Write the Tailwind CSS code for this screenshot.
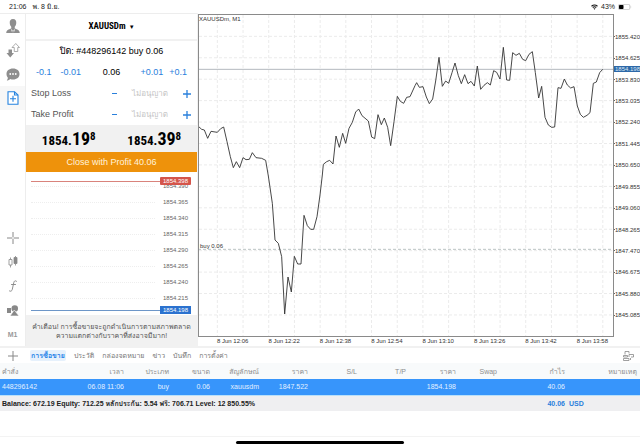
<!DOCTYPE html>
<html lang="th">
<head>
  <meta charset="UTF-8" />
  <meta name="viewport" content="width=device-width, initial-scale=1.0"/>
  <title>XAUUSDm, M1</title>
  <script src="https://cdn.jsdelivr.net/npm/@tailwindcss/browser@4"></script>
</head>
<body class="min-h-screen flex flex-col bg-white text-black font-['Liberation_Sans','Loma','Noto_Sans_Thai_Looped',sans-serif] text-[7px] leading-none">

  <!-- Status bar -->
  <header class="h-[13px] px-2 flex justify-between items-center text-[#222]">
    <div class="flex gap-[6px] pl-px"><span>21:06</span><span>พ. 8 มิ.ย.</span></div>
    <div class="flex items-center gap-[3px]">
      <svg class="w-[7px] h-[6px]" viewBox="0 0 14 11" fill="none" stroke="#111" stroke-width="2.2"><path d="M1 4Q7-1 13 4M3.5 6.500Q7 3.500 10.500 6.500"/><path d="M5 8.500Q7 7 9 8.500L7 11Z" fill="#111" stroke="none"/></svg>
      <span>43%</span>
      <svg class="w-[14px] h-[6px]" viewBox="0 0 28 12"><rect x=".7" y=".7" width="23" height="10.600" rx="3" fill="#fff" stroke="#aaa" stroke-width="1.200"/><rect x="2" y="2" width="9" height="8" rx="1.500"/><path d="M25.500 4q2 2 0 4z" fill="#aaa"/></svg>
    </div>
  </header>

  <main class="flex">
    <!-- Tools -->
    <nav class="w-[26px] shrink-0 flex flex-col justify-between border-t border-r border-[#ededed] text-[#8e8e8e]">
      <div class="flex flex-col">
        <button aria-label="Accounts" class="h-6 grid place-items-center"><svg class="w-[14px] h-[15px]" viewBox="0 0 28 30" fill="#8e8e8e"><path d="M14 0c5 0 7 4 6.500 8 0 3-1.500 6-3 7.500V19c5 2 10 3 10 9H.5c0-6 5-7 10-9v-3.500c-1.500-1.500-3-4.500-3-7.500C7 4 9 0 14 0z"/><path d="M10 20l4 3 4-3-2.500 8h-3z" fill="#fff"/><path d="M13 22.500h2l1 5.500h-4z"/></svg></button>
        <button aria-label="Trade" class="h-6 grid place-items-center"><svg class="w-[14px] h-[15px]" viewBox="0 0 28 30"><path d="M5 13h7v7h4L8.500 29 1 20h4z" fill="#8e8e8e"/><path d="M19.500 1L27 9h-3.500v8h-7V9H12z" fill="#fff" stroke="#999" stroke-width="1.600"/></svg></button>
        <button aria-label="Messages" class="h-6 grid place-items-center"><svg class="w-[14px] h-[13px]" viewBox="0 0 28 26"><path d="M14 1c8 0 13 4.500 13 11s-5 11-13 11c-2 0-4-.3-5.500-1C6 24 3 25 1.500 25 3 23 4 21 3.500 19 2 17 1 15 1 12 1 5.500 6 1 14 1z" fill="#8e8e8e"/><g fill="#fff"><circle cx="8.500" cy="12" r="1.800"/><circle cx="14" cy="12" r="1.800"/><circle cx="19.500" cy="12" r="1.800"/></g></svg></button>
        <button aria-label="New order" class="h-6 grid place-items-center bg-[#f7f7f7]"><svg class="w-[12px] h-[14px]" viewBox="0 0 24 28" fill="none" stroke="#2583e0" stroke-width="2.200"><path d="M2 1.500h13L22 8v18.500H2z" fill="#fff"/><path d="M15 1.500V8h7M12 9.500v12M6 15.500h12"/></svg></button>
      </div>
      <div class="flex flex-col">
        <button aria-label="Crosshair" class="h-6 grid place-items-center"><svg class="w-[12px] h-[12px]" viewBox="0 0 24 24" stroke="#888" stroke-width="2"><path d="M12 0v10.500M12 13.500V24M0 12h10.500M13.500 12H24"/></svg></button>
        <button aria-label="Candles" class="h-6 grid place-items-center"><svg class="w-[10px] h-[12px]" viewBox="0 0 20 24" fill="none" stroke="#888" stroke-width="1.600"><path d="M5 3v4M5 18v5M2 7h6v11H2zM15 0v3M15 15v4"/><path d="M12 3h6v12h-6z" fill="#888"/></svg></button>
        <button aria-label="Indicators" class="h-6 grid place-items-center"><svg class="w-[8px] h-[12px]" viewBox="0 0 16 24" fill="none" stroke="#888" stroke-width="1.900" stroke-linecap="round"><path d="M15 2.500c-3-2.500-5 0-5.500 3L6.500 19c-.7 3-3 4.500-5.500 3M5 9h8"/></svg></button>
        <button aria-label="Objects" class="h-6 grid place-items-center"><svg class="w-[12px] h-[11px]" viewBox="0 0 24 22" fill="#888"><path d="M0 6h8v10H0z"/><circle cx="15.500" cy="7" r="6.500"/><path d="M14.500 10L24 22H6z" stroke="#fff" stroke-width="1.200"/></svg></button>
        <button class="h-6 font-bold text-[7px] text-[#999]">M1</button>
      </div>
    </nav>

    <!-- Order -->
    <section class="w-[171px] shrink-0 flex flex-col border-t border-[#ededed] text-[9px]">
      <button class="h-[27px] border-b-2 border-[#f1f1f1] font-bold font-['Roboto_Condensed','Liberation_Sans_Narrow','Roboto',sans-serif] flex items-center justify-center gap-[3px]">XAUUSDm <span class="text-[6px]">▼</span></button>
      <p class="h-[21px] flex items-center justify-center">ปิด: #448296142 buy 0.06</p>
      <div class="h-[21px] px-[10px] flex items-center justify-between text-[#2a80dc]">
        <div class="w-14 flex gap-[9px]"><button>-0.1</button><button>-0.01</button></div>
        <output class="text-black">0.06</output>
        <div class="w-14 flex gap-[6px] justify-end"><button>+0.01</button><button>+0.1</button></div>
      </div>
      <div class="h-[21px] pl-[5px] pr-[6px] flex items-center text-[#555]">
        <label for="sl" class="flex-1">Stop Loss</label>
        <button aria-label="Decrease stop loss" class="w-[5px] h-px bg-[#2a80dc]"></button>
        <input id="sl" placeholder="ไม่อนุญาต" class="w-[66px] text-[8px] text-center placeholder:text-[#c4c4c4]">
        <button aria-label="Increase stop loss"><svg class="w-2 h-2" viewBox="0 0 8 8" stroke="#2a80dc" stroke-width="1.300"><path d="M4 0v8M0 4h8"/></svg></button>
      </div>
      <div class="h-[21px] pl-[5px] pr-[6px] flex items-center text-[#555]">
        <label for="tp" class="flex-1">Take Profit</label>
        <button aria-label="Decrease take profit" class="w-[5px] h-px bg-[#2a80dc]"></button>
        <input id="tp" placeholder="ไม่อนุญาต" class="w-[66px] text-[8px] text-center placeholder:text-[#c4c4c4]">
        <button aria-label="Increase take profit"><svg class="w-2 h-2" viewBox="0 0 8 8" stroke="#2a80dc" stroke-width="1.300"><path d="M4 0v8M0 4h8"/></svg></button>
      </div>
      <div class="h-[27px] bg-[#f1f1f1] grid grid-cols-2 font-bold font-['Roboto_Condensed','Liberation_Sans_Narrow','Roboto',sans-serif] text-[13px]">
        <div class="flex items-center justify-center"><p>1854.<span class="text-[18px]">19</span><span class="text-[11px] align-[5px]">8</span></p></div>
        <div class="flex items-center justify-center"><p>1854.<span class="text-[18px]">39</span><span class="text-[11px] align-[5px]">8</span></p></div>
      </div>
      <button class="h-5 bg-[#ee920b] text-[#fff3dc]">Close with Profit 40.06</button>

      <!-- Price ladder -->
      <div class="relative pt-[6px] pb-px pl-[5px] pr-[6px] text-[6px] text-[#666]">
        <div class="absolute inset-x-0 top-[5px] pl-[5px] pr-[6px] flex items-center"><i class="flex-1 h-px bg-[#d9837c]"></i><span class="w-[31px] h-2 leading-[8px] text-center text-white bg-[#d4554b] rounded-[1px]">1854.398</span></div>
        <div class="h-4 flex items-center gap-2"><i class="flex-1 border-t border-dotted border-[#eee]"></i><span class="w-[28px]">1854.390</span></div>
        <div class="h-4 flex items-center gap-2"><i class="flex-1 border-t border-dotted border-[#eee]"></i><span class="w-[28px]">1854.365</span></div>
        <div class="h-4 flex items-center gap-2"><i class="flex-1 border-t border-dotted border-[#eee]"></i><span class="w-[28px]">1854.340</span></div>
        <div class="h-4 flex items-center gap-2"><i class="flex-1 border-t border-dotted border-[#eee]"></i><span class="w-[28px]">1854.315</span></div>
        <div class="h-4 flex items-center gap-2"><i class="flex-1 border-t border-dotted border-[#eee]"></i><span class="w-[28px]">1854.290</span></div>
        <div class="h-4 flex items-center gap-2"><i class="flex-1 border-t border-dotted border-[#eee]"></i><span class="w-[28px]">1854.265</span></div>
        <div class="h-4 flex items-center gap-2"><i class="flex-1 border-t border-dotted border-[#eee]"></i><span class="w-[28px]">1854.240</span></div>
        <div class="h-4 flex items-center gap-2"><i class="flex-1 border-t border-dotted border-[#eee]"></i><span class="w-[28px]">1854.215</span></div>
        <div class="flex items-center"><i class="flex-1 h-px bg-[#6d96c8]"></i><span class="w-[31px] h-2 leading-[8px] text-center text-white bg-[#2b72cf]">1854.198</span></div>
      </div>
      <p class="flex-1 min-h-[31px] bg-[#f1f1f1] text-[#555] text-[7px] leading-[9px] text-center whitespace-nowrap flex items-center justify-center">คำเตือน! การซื้อขายจะถูกดำเนินการตามสภาพตลาด<br>ความแตกต่างกับราคาที่ส่งอาจมีมาก!</p>
    </section>

    <!-- Chart -->
    <section class="flex-1 min-w-0 flex flex-col pl-px pt-px border-l border-l-[#f1f1f1] text-[6px] text-[#333]">
      <div class="flex-1 flex -ml-px">
        <div class="relative flex-1 border border-[#8a8a8a]">
          <svg id="plot" class="absolute inset-0 w-full h-full" viewBox="27 45 1242 963" preserveAspectRatio="none" fill="none">
            <g id="grid" stroke="#ebebeb" stroke-dasharray="3 2"></g>
            <path d="M24 208H1269" stroke="#b4b8be" vector-effect="non-scaling-stroke"/>
            <path d="M24 748H1269" stroke="#bcc4c4" stroke-dasharray="3 2" vector-effect="non-scaling-stroke"/>
            <polyline stroke="#333" stroke-width=".9" vector-effect="non-scaling-stroke" stroke-linejoin="round" points="24,378 35,388 43,390 53,415 63,394 82,397 92,386 101,381 111,425 121,470 130,503 139,485 149,503 159,473 168,479 178,478 187,458 198,473 215,475 227,481 235,528 247,610 255,720 265,730 275,770 284,942 294,831 304,876 313,769 323,792 333,792 342,646 352,677 362,688 371,688 381,650 390,585 397,525 400,493 410,485 419,481 429,492 438,408 448,442 458,400 467,430 477,385 487,367 497,336 506,327 516,347 535,363 545,411 554,416 564,344 574,374 583,354 593,382 602,437 612,365 622,289 631,304 641,310 650,292 660,290 675,257 680,248 688,262 699,260 709,291 718,311 728,297 737,243 747,172 757,259 767,243 776,250 786,218 795,189 805,227 814,251 824,224 834,251 843,244 853,258 862,198 872,268 882,256 892,248 901,255 911,212 920,217 930,237 940,142 950,240 959,241 968,158 978,166 988,160 998,178 1007,182 1017,163 1027,155 1036,218 1046,294 1055,259 1065,352 1075,375 1085,382 1094,381 1104,263 1113,265 1123,237 1132,255 1142,264 1152,260 1162,318 1171,343 1180,352 1191,346 1200,338 1210,250 1219,246 1229,218 1238,208"/>
          </svg>
          <h2 class="absolute left-0 top-px">XAUUSDm, M1</h2>
          <span class="absolute left-px top-[71%]">buy 0.06</span>
        </div>
        <div class="relative w-[26px] pt-3 pb-[11px] flex flex-col">
          <span class="flex-1 flex items-center"><i class="w-px h-px bg-[#666]"></i>1855.420</span>
          <span class="flex-1 flex items-center"><i class="w-px h-px bg-[#666]"></i>1854.625</span>
          <span class="flex-1 flex items-center"><i class="w-px h-px bg-[#666]"></i>1853.830</span>
          <span class="flex-1 flex items-center"><i class="w-px h-px bg-[#666]"></i>1853.035</span>
          <span class="flex-1 flex items-center"><i class="w-px h-px bg-[#666]"></i>1852.240</span>
          <span class="flex-1 flex items-center"><i class="w-px h-px bg-[#666]"></i>1851.445</span>
          <span class="flex-1 flex items-center"><i class="w-px h-px bg-[#666]"></i>1850.650</span>
          <span class="flex-1 flex items-center"><i class="w-px h-px bg-[#666]"></i>1849.855</span>
          <span class="flex-1 flex items-center"><i class="w-px h-px bg-[#666]"></i>1849.060</span>
          <span class="flex-1 flex items-center"><i class="w-px h-px bg-[#666]"></i>1848.265</span>
          <span class="flex-1 flex items-center"><i class="w-px h-px bg-[#666]"></i>1847.470</span>
          <span class="flex-1 flex items-center"><i class="w-px h-px bg-[#666]"></i>1846.675</span>
          <span class="flex-1 flex items-center"><i class="w-px h-px bg-[#666]"></i>1845.880</span>
          <span class="flex-1 flex items-center"><i class="w-px h-px bg-[#666]"></i>1845.085</span>
          <span class="absolute inset-x-0 top-[16%] h-[6px] pl-px bg-[#2d68a8] text-[#dbe8f6]">1854.198</span>
        </div>
      </div>
      <div class="h-[9px] pl-[18px] pr-[12px] pt-px grid grid-cols-8 whitespace-nowrap">
        <span>8 Jun 12:06</span><span>8 Jun 12:22</span><span>8 Jun 12:38</span><span>8 Jun 12:54</span><span>8 Jun 13:10</span><span>8 Jun 13:26</span><span>8 Jun 13:42</span><span>8 Jun 13:58</span>
      </div>
    </section>
  </main>

  <!-- Terminal tabs -->
  <nav class="h-[17px] flex items-center border-t-2 border-[#f1f1f1] text-[#777]">
    <button aria-label="Add" class="w-[26px] grid place-items-center"><svg class="w-[10px] h-[10px]" viewBox="0 0 10 10" stroke="#888"><path d="M5 0v10M0 5h10"/></svg></button>
    <div class="flex-1 pl-1 flex items-center gap-2">
      <button class="h-[11px] px-px rounded-[2px] bg-[#e6f1fc] text-[#1b7fe8] font-bold">การซื้อขาย</button>
      <button>ประวัติ</button>
      <button>กล่องจดหมาย</button>
      <button>ข่าว</button>
      <button>บันทึก</button>
      <button>การตั้งค่า</button>
    </div>
    <button aria-label="Layout" class="pr-[6px]"><svg class="w-[11px] h-[10px]" viewBox="0 0 22 20" fill="none" stroke="#888" stroke-width="1.600"><path d="M4 7V1h8v4M1 9h8v3H1zM1 15h11v4H1zM12 12V7h9v5h-5M15 14v4"/></svg></button>
  </nav>

  <table class="w-full table-fixed text-right">
    <colgroup>
      <col class="w-[60px]"><col class="w-[64px]"><col class="w-[45px]"><col class="w-[41px]"><col class="w-[49px]"><col class="w-[49px]"><col class="w-[49px]"><col class="w-[49px]"><col class="w-[50px]"><col class="w-[41px]"><col class="w-[68px]"><col class="w-[75px]">
    </colgroup>
    <thead>
      <tr class="h-4 bg-[#f8fafb] text-[#8d8d8d] *:font-normal">
        <th class="text-left pl-[2px]">คำสั่ง</th><th>เวลา</th><th>ประเภท</th><th>ขนาด</th><th>สัญลักษณ์</th><th>ราคา</th><th>S/L</th><th>T/P</th><th>ราคา</th><th>Swap</th><th>กำไร</th><th class="pr-[3px]">หมายเหตุ</th>
      </tr>
    </thead>
    <tbody>
      <tr class="h-4 bg-[#3795fb] text-[#e3f0ff]">
        <td class="text-left pl-[2px]">448296142</td><td>06.08 11:06</td><td>buy</td><td>0.06</td><td>xauusdm</td><td>1847.522</td><td></td><td></td><td>1854.198</td><td></td><td>40.06</td><td></td>
      </tr>
    </tbody>
    <tfoot>
      <tr class="h-4 bg-[#efeff1] border-t border-[#b9e0fa] font-bold">
        <td colspan="10" class="text-left pl-[2px] text-[#222]">Balance: 672.19 Equity: 712.25 หลักประกัน: 5.54 ฟรี: 706.71 Level: 12 850.55%</td>
        <td class="text-[#2a80dc]">40.06</td>
        <td class="text-left pl-1 text-[#2a80dc]">USD</td>
      </tr>
    </tfoot>
  </table>

  <!-- Home indicator -->
  <footer class="mt-auto h-[11px] border-t border-[#f3f3f3] flex justify-center items-center"><div class="w-[168px] h-[3px] rounded-full bg-black"></div></footer>

  <script>
    // one vertical line per 8 minutes, one horizontal line per price label
    const grid = document.getElementById("grid");
    function addLine(d) {
      const line = document.createElementNS("http://www.w3.org/2000/svg", "path");
      line.setAttribute("d", d);
      line.setAttribute("vector-effect", "non-scaling-stroke");
      grid.appendChild(line);
    }
    for (let i = 0; i < 16; i++) addLine(`M${82 + i * 77.1} 45V1008`);
    for (let i = 0; i < 14; i++) addLine(`M27 ${109 + i * 64.3}H1269`);
  </script>

</body>
</html>
